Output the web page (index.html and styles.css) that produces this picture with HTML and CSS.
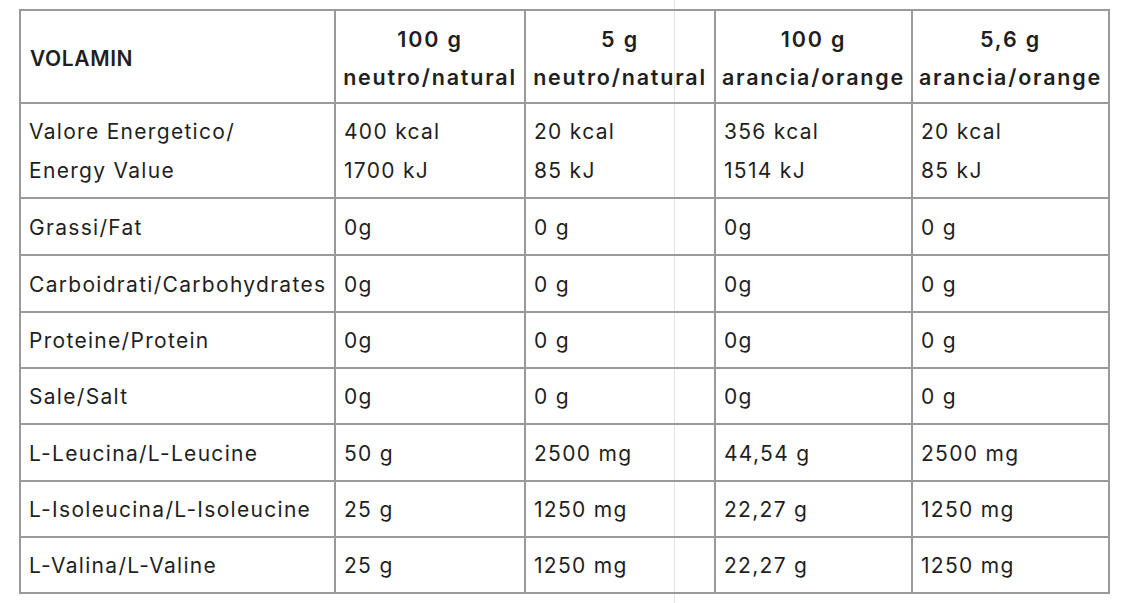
FILE: index.html
```html
<!DOCTYPE html>
<html lang="it">
<head>
<meta charset="utf-8">
<title>Volamin</title>
<link rel="stylesheet" href="styles.css">
</head>
<body>
<div class="page">
  <div class="guide"></div>
  <table class="nutri">
    <colgroup>
      <col class="c1"><col class="c2"><col class="c3"><col class="c4"><col class="c5">
    </colgroup>
    <thead>
      <tr class="head">
        <th class="name">VOLAMIN</th>
        <th><div>100 g</div><div>neutro/natural</div></th>
        <th><div>5 g</div><div>neutro/natural</div></th>
        <th><div>100 g</div><div>arancia/orange</div></th>
        <th><div>5,6 g</div><div>arancia/orange</div></th>
      </tr>
    </thead>
    <tbody>
      <tr class="tall">
        <td><div>Valore Energetico/</div><div>Energy Value</div></td>
        <td><div>400 kcal</div><div>1700 kJ</div></td>
        <td><div>20 kcal</div><div>85 kJ</div></td>
        <td><div>356 kcal</div><div>1514 kJ</div></td>
        <td><div>20 kcal</div><div>85 kJ</div></td>
      </tr>
      <tr><td>Grassi/Fat</td><td>0g</td><td>0 g</td><td>0g</td><td>0 g</td></tr>
      <tr><td>Carboidrati/Carbohydrates</td><td>0g</td><td>0 g</td><td>0g</td><td>0 g</td></tr>
      <tr class="s56"><td>Proteine/Protein</td><td>0g</td><td>0 g</td><td>0g</td><td>0 g</td></tr>
      <tr class="s56"><td>Sale/Salt</td><td>0g</td><td>0 g</td><td>0g</td><td>0 g</td></tr>
      <tr><td>L-Leucina/L-Leucine</td><td>50 g</td><td>2500 mg</td><td>44,54 g</td><td>2500 mg</td></tr>
      <tr class="s56"><td>L-Isoleucina/L-Isoleucine</td><td>25 g</td><td>1250 mg</td><td>22,27 g</td><td>1250 mg</td></tr>
      <tr class="s56"><td>L-Valina/L-Valine</td><td>25 g</td><td>1250 mg</td><td>22,27 g</td><td>1250 mg</td></tr>
    </tbody>
  </table>
</div>
</body>
</html>
```
FILE: styles.css
```css
html, body {
  margin: 0;
  padding: 0;
  background: #ffffff;
}
body {
  font-family: Inter, "Liberation Sans", sans-serif;
  color: #1f1f1f;
}
.page {
  position: relative;
  width: 1142px;
  height: 603px;
  padding: 9px 0 0 19px;
  box-sizing: border-box;
}
.guide {
  position: absolute;
  left: 674px;
  top: 0;
  width: 1px;
  height: 603px;
  background: #e2e2e2;
}
.nutri {
  position: relative;
  border-collapse: collapse;
  table-layout: fixed;
  width: 1091px;
  font-size: 21px;
  letter-spacing: 1.3px;
}
.c1 { width: 315px; }
.c2 { width: 190px; }
.c3 { width: 190px; }
.c4 { width: 197px; }
.c5 { width: 197px; }
.nutri th, .nutri td {
  border: 2px solid #9a9a9a;
  padding: 1px 8px 0 8px;
  vertical-align: middle;
  text-align: left;
  font-weight: 400;
  white-space: nowrap;
  overflow: hidden;
}
.nutri th {
  font-weight: 600;
  text-align: center;
  padding: 3px 0 0 0;
  font-size: 21.5px;
  letter-spacing: 1.8px;
}
.nutri th.name {
  text-align: left;
  padding-left: 9px;
  font-size: 21px;
  letter-spacing: 0.6px;
}
.head { height: 93px; }
.head th div { line-height: 38px; }
.tall { height: 95px; }
.tall td div { line-height: 39px; }
.nutri tbody tr { height: 57px; }
.nutri tbody tr.tall { height: 95px; }
.nutri tbody tr.s56 { height: 56px; }
```
